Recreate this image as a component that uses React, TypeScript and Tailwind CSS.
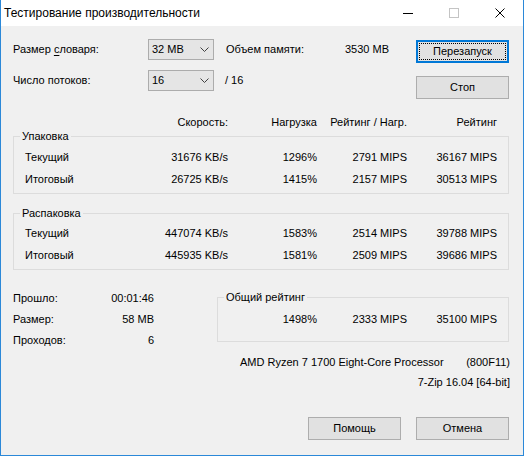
import React from "react";

const Chevron = () => (
  <svg width="9" height="5" viewBox="0 0 9 5" className="block">
    <polyline points="0.5,0.5 4.5,4.5 8.5,0.5" fill="none" stroke="#404040" strokeWidth="1" />
  </svg>
);

const Combo = ({ value }: { value: string }) => (
  <div className="w-[66px] h-[21px] bg-[#e5e5e5] border border-[#acacac] flex items-center justify-between pl-[3px] pr-[4px]">
    <span className="leading-[19px]">{value}</span>
    <Chevron />
  </div>
);

const Btn = ({ label, def }: { label: string; def?: boolean }) =>
  def ? (
    <div className="w-[93px] h-[23px] bg-[#e1e1e1] border-2 border-[#0078d7] p-[1px] flex">
      <div className="flex-1 border border-dotted border-black flex items-center justify-center leading-[15px]">
        {label}
      </div>
    </div>
  ) : (
    <div className="w-[93px] h-[23px] bg-[#e1e1e1] border border-[#adadad] flex items-center justify-center leading-[21px]">
      {label}
    </div>
  );

const Row = ({ cells }: { cells: string[] }) => (
  <div className="grid grid-cols-[103px_100px_89px_90px_90px] h-[22px] items-center leading-[22px]">
    <div>{cells[0]}</div>
    <div className="text-right">{cells[1]}</div>
    <div className="text-right">{cells[2]}</div>
    <div className="text-right">{cells[3]}</div>
    <div className="text-right">{cells[4]}</div>
  </div>
);

const Group = ({ title, pt, children }: { title: string; pt: string; children: React.ReactNode }) => (
  <div className={`relative w-[496px] border border-[#dcdcdc] pl-[11px] pb-[3px] ${pt}`}>
    <div className="absolute top-[-7px] left-[6px] px-[2px] bg-[#f0f0f0] leading-[13px]">{title}</div>
    {children}
  </div>
);

export default function App() {
  return (
    <div className="w-[524px] h-[456px] bg-[#f0f0f0] border-x border-b border-[#2b88d8] flex flex-col overflow-hidden text-[11px] text-black font-['Liberation_Sans',Arial,sans-serif]">
      {/* Title bar */}
      <div className="h-[26px] bg-white flex items-center shrink-0">
        <div className="pl-[3px] text-[12px] leading-[26px] flex-1">Тестирование производительности</div>
        <div className="w-[46px] h-full flex items-center justify-center">
          <div className="w-[10px] h-px bg-black" />
        </div>
        <div className="w-[46px] h-full flex items-center justify-center">
          <div className="w-[10px] h-[10px] border border-[#c4c4c4]" />
        </div>
        <div className="w-[46px] h-full flex items-center justify-center">
          <svg width="10" height="10" viewBox="0 0 10 10" className="block">
            <path d="M0.5 0.5 L9.5 9.5 M9.5 0.5 L0.5 9.5" stroke="#000" strokeWidth="1" fill="none" />
          </svg>
        </div>
      </div>

      {/* Content */}
      <div className="flex-1 flex flex-col pl-[12px]">
        {/* Top section */}
        <div className="w-[496px] flex justify-between pt-[13px]">
          <div className="flex flex-col">
            <div className="flex items-center h-[21px]">
              <div className="w-[135px]">
                Размер <span className="underline underline-offset-[2px]">с</span>ловаря:
              </div>
              <Combo value="32 MB" />
              <div className="ml-[12px] w-[163px] flex justify-between">
                <span>Объем памяти:</span>
                <span>3530 MB</span>
              </div>
            </div>
            <div className="flex items-center h-[21px] mt-[10px]">
              <div className="w-[135px]">Число потоков:</div>
              <Combo value="16" />
              <div className="ml-[11px]">/ 16</div>
            </div>
          </div>
          <div className="flex flex-col gap-[13px] pt-[1px]">
            <Btn label="Перезапуск" def />
            <Btn label="Стоп" />
          </div>
        </div>

        {/* Header row */}
        <div className="mt-[16px] pl-[12px] grid grid-cols-[103px_100px_89px_90px_90px] h-[14px] leading-[14px]">
          <div />
          <div className="text-right">Скорость:</div>
          <div className="text-right">Нагрузка</div>
          <div className="text-right">Рейтинг / Нагр.</div>
          <div className="text-right">Рейтинг</div>
        </div>

        <div className="mt-[7px]">
          <Group title="Упаковка" pt="pt-[9px]">
            <Row cells={["Текущий", "31676 KB/s", "1296%", "2791 MIPS", "36167 MIPS"]} />
            <Row cells={["Итоговый", "26725 KB/s", "1415%", "2157 MIPS", "30513 MIPS"]} />
          </Group>
        </div>

        <div className="mt-[19px]">
          <Group title="Распаковка" pt="pt-[8px]">
            <Row cells={["Текущий", "447074 KB/s", "1583%", "2514 MIPS", "39788 MIPS"]} />
            <Row cells={["Итоговый", "445935 KB/s", "1581%", "2509 MIPS", "39686 MIPS"]} />
          </Group>
        </div>

        {/* Bottom section */}
        <div className="mt-[18px] flex">
          <div className="w-[204px] flex flex-col">
            <div className="w-[141px] h-[21px] flex justify-between items-center">
              <span>Прошло:</span>
              <span>00:01:46</span>
            </div>
            <div className="w-[141px] h-[21px] flex justify-between items-center">
              <span>Размер:</span>
              <span>58 MB</span>
            </div>
            <div className="w-[141px] h-[21px] flex justify-between items-center">
              <span>Проходов:</span>
              <span>6</span>
            </div>
          </div>
          <div className="relative mt-[9px] w-[292px] h-[45px] border border-[#dcdcdc] pt-[10px]">
            <div className="absolute top-[-7px] left-[6px] px-[2px] bg-[#f0f0f0] leading-[13px]">Общий рейтинг</div>
            <div className="grid grid-cols-[99px_90px_90px] h-[22px] items-center leading-[22px]">
              <div className="text-right">1498%</div>
              <div className="text-right">2333 MIPS</div>
              <div className="text-right">35100 MIPS</div>
            </div>
          </div>
        </div>

        <div className="mt-[1px] w-[497px] h-[20px] flex items-center">
          <span className="ml-[227px]">AMD Ryzen 7 1700 Eight-Core Processor</span>
          <span className="ml-auto">(800F11)</span>
        </div>
        <div className="w-[497px] h-[20px] flex items-center justify-end">
          <span>7-Zip 16.04 [64-bit]</span>
        </div>

        <div className="mt-[25px] w-[496px] flex justify-end gap-[15px]">
          <Btn label="Помощь" />
          <Btn label="Отмена" />
        </div>
      </div>
    </div>
  );
}
